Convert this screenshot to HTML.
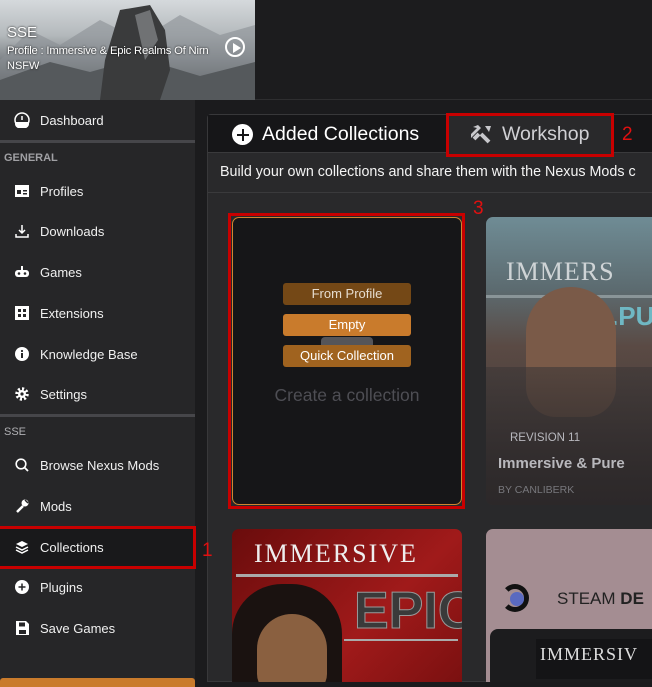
<!DOCTYPE html>
<html><head><meta charset="utf-8"><style>
*{margin:0;padding:0;box-sizing:border-box}
body{width:652px;height:687px;overflow:hidden;background:#1b1b1d;font-family:"Liberation Sans",sans-serif;position:relative;color:#e8e8e8}
.abs{position:absolute}
.hero{left:0;top:0;width:255px;height:100px;background:linear-gradient(180deg,#d5d9dc 0%,#b4b9bc 35%,#7d8286 60%,#45484a 85%,#2e2f30 100%);overflow:hidden}
.topbar{left:255px;top:0;width:397px;height:100px;background:#1c1c1e;border-bottom:1px solid #2e2e30}
.side{left:0;top:100px;width:195px;height:587px;background:#262628}
.item{position:absolute;left:0;width:195px;height:40px;font-size:13px;color:#f0f0f0;display:flex;align-items:center}
.item .ic{width:16px;height:16px;margin-left:14px;margin-right:10px;display:flex;align-items:center;justify-content:center}
.sec{position:absolute;left:4px;font-size:11px;font-weight:bold;color:#a0a0a4}
.div{position:absolute;left:0;width:195px;height:3px;background:#46464a}
.red{position:absolute;border:3px solid #c80000;z-index:5}
.rn{position:absolute;color:#e01010;font-size:19px;z-index:5}
</style></head><body>
<div class="abs hero">
  <svg width="255" height="100" style="position:absolute;left:0;top:0">
    <polygon points="0,60 30,30 60,45 100,20 140,40 180,15 220,35 255,25 255,100 0,100" fill="#8a9094" opacity=".6"/>
    <polygon points="0,80 50,62 90,72 140,58 200,76 255,62 255,100 0,100" fill="#55595c"/>
    <path d="M120 10 L150 5 L165 30 L170 70 L160 100 L100 100 L105 60 Z" fill="#3a3b3c"/>
    <path d="M135 15 L150 10 L158 40 L145 60 Z" fill="#707274"/>
  </svg>
  <div class="abs" style="left:7px;top:24px;font-size:15px;color:#fff;text-shadow:0 0 2px #000">SSE</div>
  <div class="abs" style="left:7px;top:45px;font-size:11.3px;color:#fff;text-shadow:0 0 2px #000;letter-spacing:-.2px;white-space:nowrap">Profile : Immersive &amp; Epic Realms Of Nirn</div>
  <div class="abs" style="left:7px;top:60px;font-size:11px;color:#fff;text-shadow:0 0 2px #000">NSFW</div>
  <div class="abs" style="left:225px;top:37px;width:20px;height:20px;border:2.5px solid #fff;border-radius:50%"><div style="position:absolute;left:6px;top:3.5px;border-left:8px solid #fff;border-top:5px solid transparent;border-bottom:5px solid transparent"></div></div>
</div>
<div class="abs topbar"></div>
<div class="abs side"></div>
<div class="item" style="top:100px"><span class="ic"><svg width="16" height="16"><circle cx="8" cy="8" r="7" fill="none" stroke="#fff" stroke-width="1.5"/><path d="M1 10h14v2a7 5 0 0 1-14 0z" fill="#fff"/><path d="M8 8L8 4" stroke="#fff" stroke-width="1.5"/></svg></span>Dashboard</div>
<div class="div" style="top:140px"></div>
<div class="sec" style="top:152px">GENERAL</div>
<div class="item" style="top:171px"><span class="ic"><svg width="14" height="12"><rect width="14" height="12" fill="#fff"/><rect x="2" y="5" width="4" height="4" fill="#262628"/><rect x="8" y="5" width="4" height="1.5" fill="#262628"/><rect x="8" y="8" width="4" height="1.5" fill="#262628"/></svg></span>Profiles</div>
<div class="item" style="top:211px"><span class="ic"><svg width="14" height="14"><path d="M7 1v8M4 6l3 3 3-3M1 10v3h12v-3" stroke="#fff" stroke-width="1.5" fill="none"/></svg></span>Downloads</div>
<div class="item" style="top:252px"><span class="ic"><svg width="14" height="12"><rect x="0" y="4" width="14" height="7" rx="3" fill="#fff"/><rect x="6" y="0" width="2" height="4" fill="#fff"/><circle cx="4" cy="7.5" r="1.3" fill="#262628"/><circle cx="10" cy="7.5" r="1.3" fill="#262628"/></svg></span>Games</div>
<div class="item" style="top:293px"><span class="ic"><svg width="14" height="14"><rect width="14" height="14" fill="#fff"/><rect x="3" y="3" width="3" height="3" fill="#262628"/><rect x="8" y="3" width="3" height="3" fill="#262628"/><rect x="3" y="8" width="3" height="3" fill="#262628"/><rect x="8" y="8" width="3" height="3" fill="#262628"/></svg></span>Extensions</div>
<div class="item" style="top:334px"><span class="ic"><svg width="14" height="14"><circle cx="7" cy="7" r="7" fill="#fff"/><rect x="6" y="6" width="2" height="5" fill="#262628"/><circle cx="7" cy="4" r="1.1" fill="#262628"/></svg></span>Knowledge Base</div>
<div class="item" style="top:374px"><span class="ic"><svg width="14" height="14"><circle cx="7" cy="7" r="5" fill="none" stroke="#fff" stroke-width="3.5" stroke-dasharray="2 1.9"/><circle cx="7" cy="7" r="4" fill="#fff"/><circle cx="7" cy="7" r="1.6" fill="#262628"/></svg></span>Settings</div>
<div class="div" style="top:414px"></div>
<div class="sec" style="top:426px;font-weight:normal;color:#b0b0b4">SSE</div>
<div class="item" style="top:445px"><span class="ic"><svg width="14" height="14"><circle cx="6" cy="6" r="4.8" fill="none" stroke="#fff" stroke-width="1.6"/><path d="M9.5 9.5l3.5 3.5" stroke="#fff" stroke-width="1.8"/></svg></span>Browse Nexus Mods</div>
<div class="item" style="top:486px"><span class="ic"><svg width="14" height="14"><path d="M2 13l6-6" stroke="#fff" stroke-width="2.5"/><circle cx="10" cy="4" r="3.5" fill="#fff"/><path d="M10 1l3 3" stroke="#262628" stroke-width="1.5"/></svg></span>Mods</div>
<div class="item" style="top:527px;background:#19191b"><span class="ic"><svg width="14" height="14"><path d="M7 1l6 3-6 3-6-3z" fill="#fff"/><path d="M1 7l6 3 6-3M1 10l6 3 6-3" stroke="#fff" stroke-width="1.5" fill="none"/></svg></span>Collections</div>
<div class="item" style="top:567px"><span class="ic"><svg width="14" height="14"><circle cx="7" cy="7" r="7" fill="#fff"/><path d="M7 3.5v7M3.5 7h7" stroke="#262628" stroke-width="1.5"/></svg></span>Plugins</div>
<div class="item" style="top:608px"><span class="ic"><svg width="13" height="14"><path d="M0 0h10l3 3v11H0z" fill="#fff"/><rect x="3" y="1.5" width="6" height="4" fill="#262628"/><rect x="3" y="9" width="7" height="4" fill="#262628"/></svg></span>Save Games</div>
<div class="abs" style="left:0;top:678px;width:195px;height:9px;background:#c97b2c;border-radius:3px 3px 0 0"></div>
<div class="red" style="left:-3px;top:526px;width:199px;height:43px"></div>
<div class="rn" style="left:202px;top:540px">1</div>

<!-- main panel -->
<div class="abs" style="left:207px;top:114px;width:450px;height:568px;background:#29292b;border:1px solid #38383a;border-radius:4px 0 0 0"></div>
<div class="abs" style="left:208px;top:115px;width:444px;height:38px;background:#161618;border-bottom:1px solid #3a3a3c"></div>
<div class="abs" style="left:446px;top:115px;width:166px;height:38px;background:#29292b"></div>
<div class="abs" style="left:232px;top:124px;width:21px;height:21px;border-radius:50%;background:#fff"><div style="position:absolute;left:9.5px;top:4.5px;width:2px;height:12px;background:#161618"></div><div style="position:absolute;left:4.5px;top:9.5px;width:12px;height:2px;background:#161618"></div></div>
<div class="abs" style="left:262px;top:123px;font-size:19.5px;color:#fff;white-space:nowrap">Added Collections</div>
<svg class="abs" style="left:471px;top:124px" width="22" height="20"><path d="M2 3l5-2 3 3-10 10-2-2 8-8z" fill="#c8c8cc"/><path d="M10 10l8 8" stroke="#c8c8cc" stroke-width="4"/><path d="M3 15l5-5" stroke="#c8c8cc" stroke-width="4"/><path d="M14 2l6 0-2 6z" fill="#c8c8cc"/></svg>
<div class="abs" style="left:502px;top:123px;font-size:19.5px;color:#d0d0d4">Workshop</div>
<div class="red" style="left:446px;top:113px;width:168px;height:44px"></div>
<div class="rn" style="left:622px;top:124px">2</div>
<div class="abs" style="left:220px;top:164px;font-size:14.3px;color:#f4f4f4;white-space:nowrap">Build your own collections and share them with the Nexus Mods c</div>
<div class="abs" style="left:208px;top:192px;width:444px;height:1px;background:#3a3a3c"></div>

<!-- card 1 -->
<div class="red" style="left:228px;top:213px;width:237px;height:296px"></div>
<div class="rn" style="left:473px;top:198px">3</div>
<div class="abs" style="left:232px;top:217px;width:230px;height:288px;background:#161618;border:1.5px solid #d08530;border-radius:7px"></div>
<div class="abs" style="left:321px;top:337px;width:52px;height:26px;background:#555559;border-radius:4px"></div>
<div class="abs" style="left:283px;top:283px;width:128px;height:22px;background:#744816;border-radius:3px;font-size:13px;color:#e6dccf;text-align:center;line-height:22px">From Profile</div>
<div class="abs" style="left:283px;top:314px;width:128px;height:22px;background:#c97b2c;border-radius:3px;font-size:13px;color:#fff;text-align:center;line-height:22px">Empty</div>
<div class="abs" style="left:283px;top:345px;width:128px;height:22px;background:#a0631f;border-radius:3px;font-size:13px;color:#fff;text-align:center;line-height:22px">Quick Collection</div>
<div class="abs" style="left:232px;top:385px;width:230px;text-align:center;font-size:17.5px;color:#4e4e54">Create a collection</div>

<!-- card 2 -->
<div class="abs" style="left:486px;top:217px;width:180px;height:288px;border-radius:7px;overflow:hidden;background:linear-gradient(180deg,#6f8c95 0%,#5c6b70 25%,#5a4a44 45%,#4a3f3c 70%,#2f2a2b 100%)">
  <div style="position:absolute;left:20px;top:40px;font-family:'Liberation Serif',serif;font-size:26px;color:#cfd4d6;letter-spacing:1px">IMMERS</div>
  <div style="position:absolute;left:0;top:78px;width:180px;height:3px;background:#8a9598"></div>
  <div style="position:absolute;left:125px;top:84px;font-size:26px;font-weight:bold;color:#6fb8c4">.PU</div>
  <div style="position:absolute;left:40px;top:70px;width:90px;height:130px;border-radius:45px 45px 30px 30px;background:#7a5a48"></div>
  <div style="position:absolute;left:0;top:150px;width:180px;height:140px;background:linear-gradient(180deg,rgba(60,55,55,.6),#2c2829)"></div>
  <div style="position:absolute;left:24px;top:215px;font-size:11.5px;color:#b8b8be">REVISION 11</div>
  <div style="position:absolute;left:12px;top:238px;font-size:15px;font-weight:bold;color:#b8b8bc">Immersive &amp; Pure</div>
  <div style="position:absolute;left:12px;top:267px;font-size:10.5px;color:#77777c">BY CANLIBERK</div>
</div>

<!-- row 2 -->
<div class="abs" style="left:232px;top:529px;width:230px;height:155px;border-radius:7px 7px 0 0;overflow:hidden;background:linear-gradient(135deg,#6a0c0c,#a01a1a 60%,#7a1010)">
  <div style="position:absolute;left:22px;top:10px;font-family:'Liberation Serif',serif;font-size:26px;color:#eee;letter-spacing:2px">IMMERSIVE</div>
  <div style="position:absolute;left:4px;top:45px;width:222px;height:3px;background:#aaa"></div>
  <div style="position:absolute;left:122px;top:52px;font-size:52px;font-weight:bold;color:#3a3a3a;-webkit-text-stroke:1px #999">EPIC</div>
  <div style="position:absolute;left:112px;top:110px;width:114px;height:2px;background:#aaa"></div>
  <div style="position:absolute;left:0;top:55px;width:110px;height:110px;border-radius:50px 50px 0 0;background:#1a1210"></div>
  <div style="position:absolute;left:25px;top:85px;width:70px;height:80px;border-radius:35px 35px 20px 20px;background:#8a6040"></div>
</div>
<div class="abs" style="left:486px;top:529px;width:170px;height:155px;border-radius:7px 0 0 0;overflow:hidden;background:#a48d92">
  <div style="position:absolute;left:15px;top:55px;width:28px;height:28px;border-radius:50%;border:5px solid #111;border-left-color:transparent"></div>
  <div style="position:absolute;left:24px;top:63px;width:14px;height:14px;border-radius:50%;background:#5a6ac0"></div>
  <div style="position:absolute;left:71px;top:60px;font-size:17px;color:#222">STEAM <b>DE</b></div>
  <div style="position:absolute;left:4px;top:100px;width:170px;height:60px;background:#1c1c1e;border-radius:8px"></div>
  <div style="position:absolute;left:50px;top:110px;width:130px;height:40px;background:#141416"></div>
  <div style="position:absolute;left:54px;top:115px;font-family:'Liberation Serif',serif;font-size:18px;color:#ddd;letter-spacing:1px">IMMERSIV</div>
</div>
<div class="abs" style="left:195px;top:682px;width:457px;height:5px;background:#1b1b1d"></div>
</body></html>
